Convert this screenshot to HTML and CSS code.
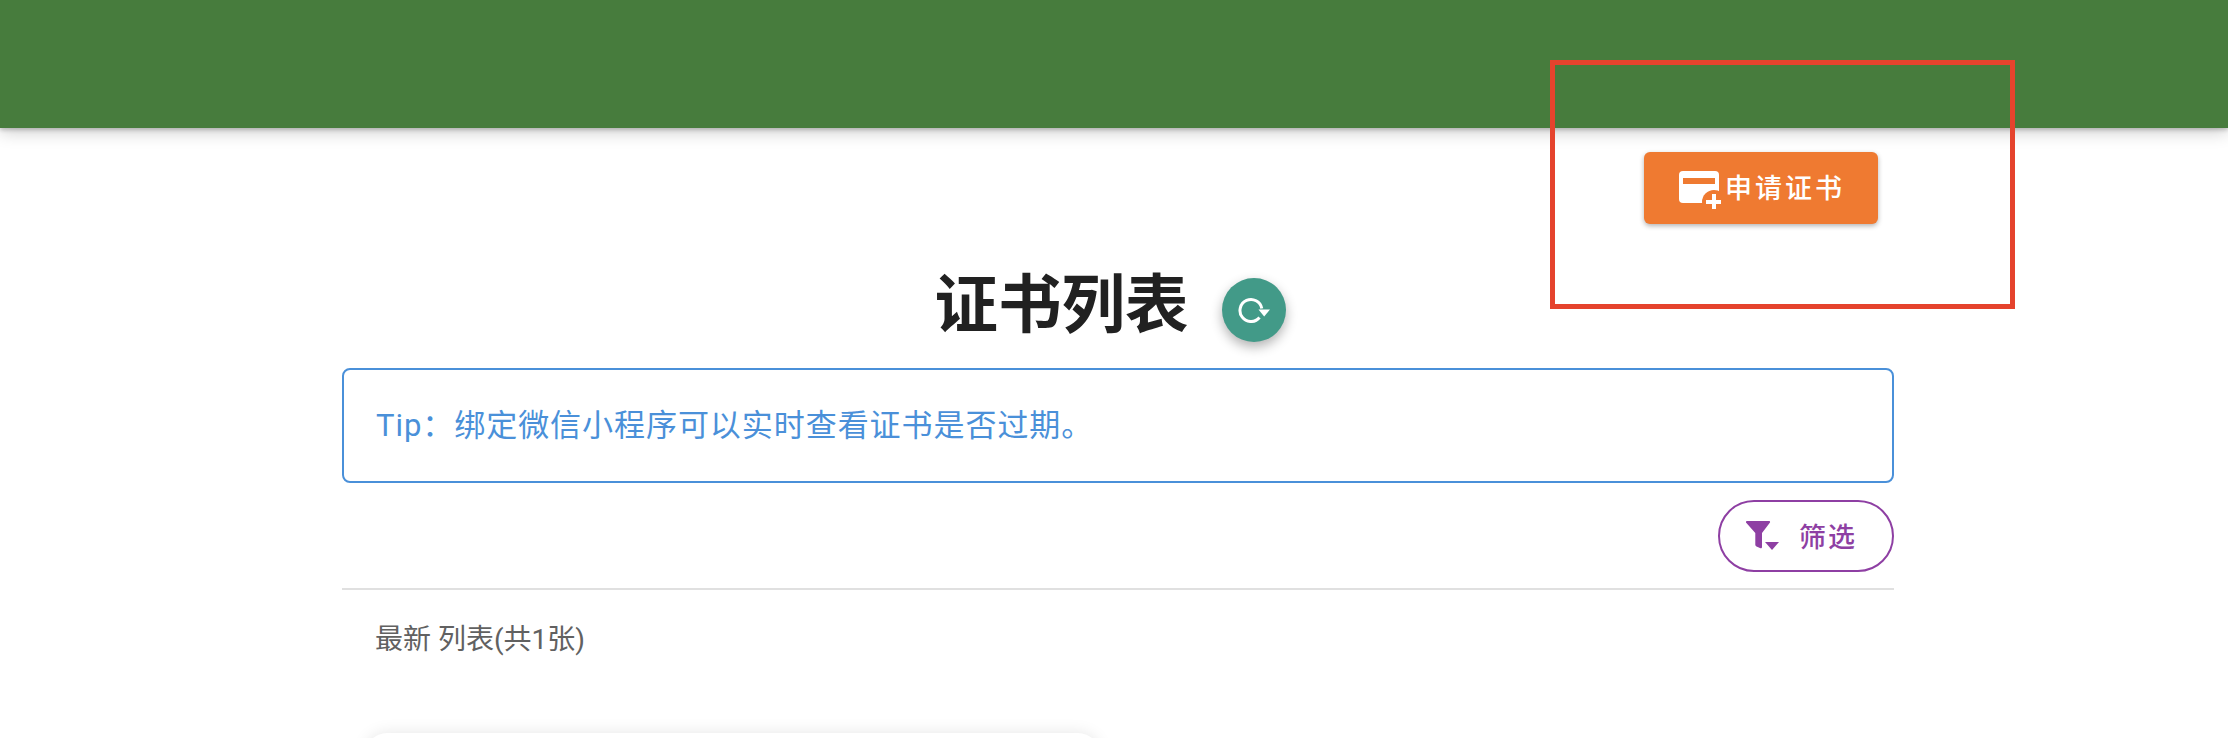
FILE: index.html
```html
<!DOCTYPE html>
<html lang="zh-CN">
<head>
    <meta charset="UTF-8">
    <title>证书列表</title>
    <link rel="stylesheet" href="styles.css">
</head>
<body>
    <header class="app-bar"></header>

    <div class="apply-row">
        <button class="apply-button">
            <svg class="apply-icon" viewBox="0 0 42 38" width="42" height="38">
                <rect x="0" y="0" width="40" height="32" rx="4" fill="#fff"/>
                <rect x="4" y="7" width="32" height="6" fill="#ef7a31"/>
                <circle cx="35" cy="31" r="12" fill="#ef7a31"/>
                <path d="M33 23h4v6h5v4h-5v5h-4v-5h-6v-4h6z" fill="#fff"/>
            </svg>
            <span>申请证书</span>
        </button>
    </div>

    <main class="content">
        <div class="title-row">
            <h1 class="title">证书列表</h1>
            <button class="refresh-button">
                <svg viewBox="0 0 32 26" width="32" height="26">
                    <path d="M21.500 20.500A11 11 0 1 1 23.800 11.500" fill="none" stroke="#fff" stroke-width="3"/>
                    <path d="M20.500 12.500h11.500l-5.800 7z" fill="#fff"/>
                </svg>
            </button>
        </div>

        <div class="tip">Tip：绑定微信小程序可以实时查看证书是否过期。</div>

        <div class="filter-row">
            <button class="filter-button">
                <svg viewBox="0 0 33 29" width="33" height="29">
                    <path d="M1 0h22c1 0 1.400 1 .8 1.800L16 12v14c0 1-.6 1.500-1.500 1.300l-4-1.800c-.8-.4-1.200-1-1.200-1.800V12L.2 1.800C-.4 1 0 0 1 0z" fill="#8e3fa3"/>
                    <path d="M19 21h14l-7 8z" fill="#8e3fa3"/>
                </svg>
                <span>筛选</span>
            </button>
        </div>

        <div class="list-head">最新 列表(共1张)</div>

        <div class="cert-card"></div>
    </main>

    <!-- annotation drawn over the screenshot -->
    <div class="highlight-box"></div>
</body>
</html>
```

FILE: styles.css
```css
html, body {
    margin: 0;
    height: 738px;
    overflow: hidden;
    background-color: #ffffff;
}

body {
    position: relative;
    font-family: 'Roboto', 'Noto Sans CJK SC', sans-serif;
}

button {
    font-family: inherit;
    cursor: pointer;
}

.app-bar {
    height: 128px;
    background-color: #477c3d;
    box-shadow: 0 2px 4px rgba(0, 0, 0, 0.2), 0 4px 16px rgba(0, 0, 0, 0.2);
}

.apply-row {
    display: flex;
    justify-content: flex-end;
    padding: 24px 350px 0 0;
}

.apply-button {
    display: flex;
    align-items: center;
    justify-content: center;
    gap: 4px;
    width: 234px;
    height: 72px;
    padding: 0 0 4px 2px;
    border: none;
    border-radius: 6px;
    background-color: #ef7a31;
    color: #ffffff;
    font-size: 27px;
    font-weight: 500;
    letter-spacing: 3px;
    box-shadow: 0 2px 5px rgba(0, 0, 0, 0.3);
}

.apply-icon {
    margin-top: 8px;
}

.content {
    width: 1552px;
    margin-left: 342px;
}

.title-row {
    display: flex;
    align-items: flex-start;
    justify-content: center;
    gap: 33px;
    margin-top: 54px;
    padding-right: 16px;
}

.title {
    margin: 0;
    font-size: 63.500px;
    line-height: 56px;
    font-weight: 700;
    color: #212121;
}

.refresh-button {
    display: flex;
    align-items: center;
    justify-content: center;
    flex-shrink: 0;
    width: 64px;
    height: 64px;
    padding: 0;
    border: none;
    border-radius: 50%;
    background-color: #429a88;
    box-shadow: 0 5px 12px rgba(0, 0, 0, 0.3);
}

.tip {
    box-sizing: border-box;
    height: 115px;
    margin-top: 26px;
    padding: 0 32px;
    border: 2px solid #4a90d9;
    border-radius: 8px;
    color: #4a90d9;
    font-size: 31px;
    letter-spacing: 0.950px;
    line-height: 111px;
}

.filter-row {
    display: flex;
    justify-content: flex-end;
    margin-top: 17px;
}

.filter-button {
    display: flex;
    align-items: center;
    gap: 20px;
    box-sizing: border-box;
    width: 176px;
    height: 72px;
    padding: 0 0 2px 26px;
    border: 2px solid #8e3fa3;
    border-radius: 36px;
    background-color: #ffffff;
    color: #8e3fa3;
    font-size: 27px;
    font-weight: 500;
    letter-spacing: 2px;
}

.list-head {
    margin-top: 16px;
    padding: 30px 33px 0;
    border-top: 2px solid #e0e0e0;
    color: #616161;
    font-size: 28px;
    line-height: 40px;
}

.cert-card {
    width: 735px;
    height: 200px;
    margin: 73px 0 0 23px;
    border-radius: 22px;
    background-color: #ffffff;
    box-shadow: 0 0 16px rgba(0, 0, 0, 0.1);
}

.highlight-box {
    position: absolute;
    left: 1550px;
    top: 60px;
    box-sizing: border-box;
    width: 465px;
    height: 249px;
    border: 5px solid #e5432d;
    pointer-events: none;
}
```
